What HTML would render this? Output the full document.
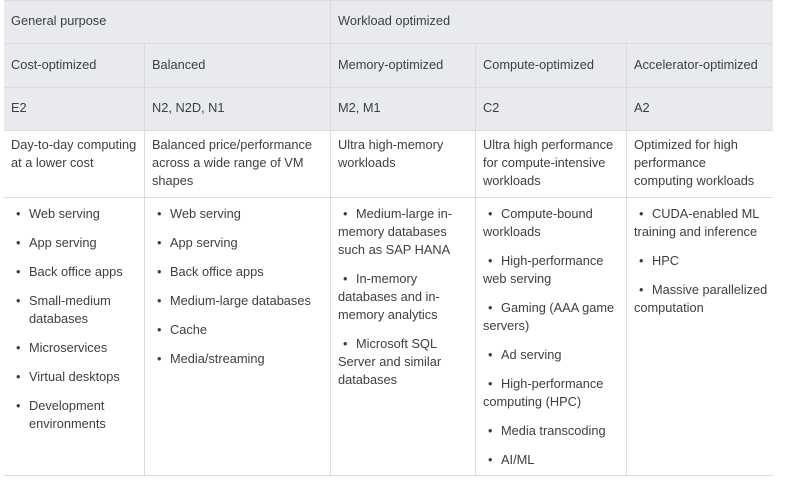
<!DOCTYPE html>
<html><head><style>
body{margin:0;width:785px;height:484px;background:#fff;font-family:"Liberation Sans",Arial,sans-serif;font-size:12.8px;color:#3c4043;position:relative;overflow:hidden}
.c{position:absolute;box-sizing:border-box;padding:0 7px;line-height:18px}
.h{background:#e8eaed}
.l{position:absolute;background:#dadce0}
.b{margin-bottom:11px}
.b:before{content:"•";display:inline-block;width:18px;padding-left:5px;box-sizing:border-box}
.hang .b{padding-left:18px;text-indent:-18px}
.hang .b:before{text-indent:0}
</style></head><body>
<div class="c h" style="left:4px;top:0;width:769px;height:43px"></div>
<div class="c h" style="left:4px;top:43px;width:769px;height:87px"></div>
<div class="l" style="left:4px;top:0;width:769px;height:1px"></div>
<div class="l" style="left:4px;top:43px;width:769px;height:1px"></div>
<div class="l" style="left:4px;top:87px;width:769px;height:1px"></div>
<div class="l" style="left:4px;top:130px;width:769px;height:1px"></div>
<div class="l" style="left:4px;top:197px;width:769px;height:1px"></div>
<div class="l" style="left:4px;top:475px;width:769px;height:1px"></div>
<div class="l" style="left:330px;top:0;width:1px;height:476px"></div>
<div class="l" style="left:144px;top:43px;width:1px;height:433px"></div>
<div class="l" style="left:475px;top:43px;width:1px;height:433px"></div>
<div class="l" style="left:626px;top:43px;width:1px;height:433px"></div>

<div class="c" style="left:4px;top:12px">General purpose</div>
<div class="c" style="left:331px;top:12px">Workload optimized</div>

<div class="c" style="left:4px;top:56px">Cost-optimized</div>
<div class="c" style="left:145px;top:56px">Balanced</div>
<div class="c" style="left:331px;top:56px">Memory-optimized</div>
<div class="c" style="left:476px;top:56px">Compute-optimized</div>
<div class="c" style="left:627px;top:56px">Accelerator-optimized</div>

<div class="c" style="left:4px;top:99px">E2</div>
<div class="c" style="left:145px;top:99px">N2, N2D, N1</div>
<div class="c" style="left:331px;top:99px">M2, M1</div>
<div class="c" style="left:476px;top:99px">C2</div>
<div class="c" style="left:627px;top:99px">A2</div>

<div class="c" style="left:4px;top:136px;width:140px">Day-to-day computing at a lower cost</div>
<div class="c" style="left:145px;top:136px;width:185px">Balanced price/performance across a wide range of VM shapes</div>
<div class="c" style="left:331px;top:136px;width:144px">Ultra high-memory workloads</div>
<div class="c" style="left:476px;top:136px;width:150px">Ultra high performance for compute-intensive workloads</div>
<div class="c" style="left:627px;top:136px;width:146px">Optimized for high<br>performance<br>computing workloads</div>

<div class="c hang" style="left:4px;top:205px;width:140px">
<div class="b">Web serving</div><div class="b">App serving</div><div class="b">Back office apps</div><div class="b">Small-medium databases</div><div class="b">Microservices</div><div class="b">Virtual desktops</div><div class="b">Development environments</div></div>
<div class="c" style="left:145px;top:205px;width:185px">
<div class="b">Web serving</div><div class="b">App serving</div><div class="b">Back office apps</div><div class="b">Medium-large databases</div><div class="b">Cache</div><div class="b">Media/streaming</div></div>
<div class="c" style="left:331px;top:205px;width:140px">
<div class="b">Medium-large in-memory databases such as SAP HANA</div><div class="b">In-memory databases and in-memory analytics</div><div class="b">Microsoft SQL Server and similar databases</div></div>
<div class="c" style="left:476px;top:205px;width:150px">
<div class="b">Compute-bound workloads</div><div class="b">High-performance web serving</div><div class="b">Gaming (AAA game<br>servers)</div><div class="b">Ad serving</div><div class="b">High-performance computing (HPC)</div><div class="b">Media transcoding</div><div class="b">AI/ML</div></div>
<div class="c" style="left:627px;top:205px;width:160px">
<div class="b">CUDA-enabled ML<br>training and inference</div><div class="b">HPC</div><div class="b">Massive parallelized<br>computation</div></div>
</body></html>
